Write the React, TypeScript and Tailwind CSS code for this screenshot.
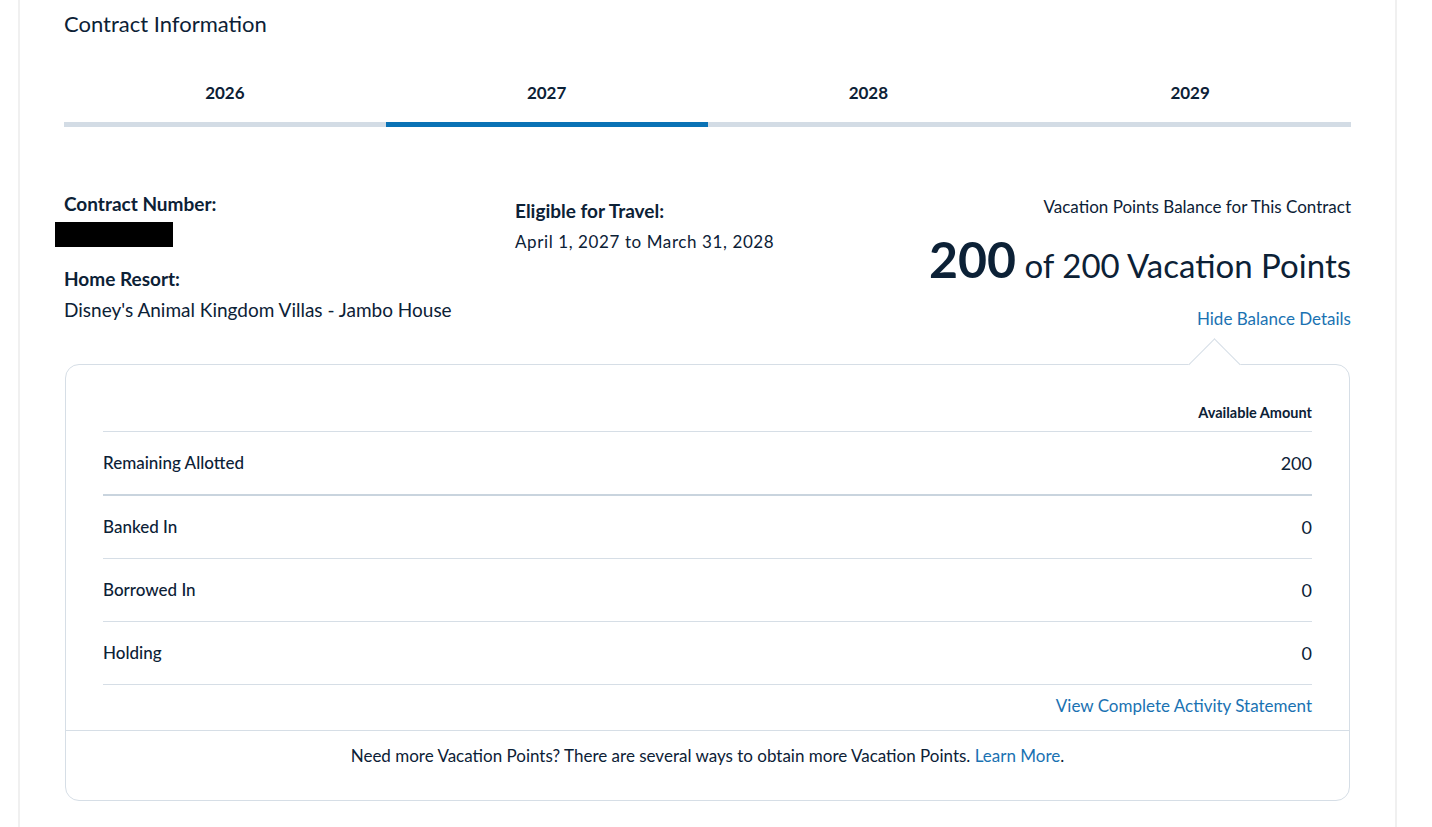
import React from "react";

const rows = [
  { label: "Remaining Allotted", value: "200", strong: true },
  { label: "Banked In", value: "0" },
  { label: "Borrowed In", value: "0" },
  { label: "Holding", value: "0" },
];

export default function App() {
  return (
    <div className="min-h-[827px] bg-white font-['Lato',sans-serif] text-[#0c2136] overflow-hidden">
      <div className="ml-[18px] w-[1379px] min-h-[827px] border-x-2 border-[#f0f0f0] bg-white px-[44px] pt-[11px]">
        <h2 className="text-[22px] leading-[26px] font-normal">Contract Information</h2>

        <div className="mt-[44px] flex">
          {["2026", "2027", "2028", "2029"].map((y) => (
            <div
              key={y}
              className={`flex-1 text-center text-[17px] leading-[24px] font-bold pb-[17px] border-b-[5px] ${
                y === "2027" ? "border-[#0a72b5]" : "border-[#d3dce5]"
              }`}
            >
              {y}
            </div>
          ))}
        </div>

        <div className="mt-[65px] flex">
          <div className="w-[451px]">
            <div className="text-[19px] leading-[24px] font-bold">Contract Number:</div>
            <div className="mt-[6px] -ml-[9px] h-[25px] w-[118px] bg-black" />
            <div className="mt-[20px] text-[19px] leading-[24px] font-bold">Home Resort:</div>
            <div className="mt-[7px] text-[19px] leading-[24px]">Disney's Animal Kingdom Villas - Jambo House</div>
          </div>
          <div className="flex-1 pt-[7px]">
            <div className="text-[19px] leading-[24px] font-bold">Eligible for Travel:</div>
            <div className="mt-[8px] text-[17px] leading-[22px] tracking-[0.6px]">April 1, 2027 to March 31, 2028</div>
          </div>
          <div className="text-right pt-[4px]">
            <div className="text-[17px] leading-[22px]">Vacation Points Balance for This Contract</div>
            <div className="mt-[13px] leading-[56px] whitespace-nowrap">
              <span className="text-[50px] font-bold">200</span>
              <span className="text-[33px]"> of 200 Vacation Points</span>
            </div>
            <a className="mt-[8px] block text-[17px] leading-[22px] text-[#1a72b2]">Hide Balance Details</a>
          </div>
        </div>

        <div className="relative mt-[34px] mx-[1px] rounded-[14px] border border-[#d6dee6] bg-white">
          <div className="absolute right-[116px] top-[-19px] h-[37px] w-[37px] rotate-45 border-l border-t border-[#d6dee6] bg-white" />
          <div className="relative px-[37px]">
            <div className="pt-[38px] pb-[8px] text-right text-[14.5px] leading-[20px] font-bold border-b border-[#d6dee6]">
              Available Amount
            </div>
            {rows.map((r) => (
              <div
                key={r.label}
                className={`flex items-center justify-between text-[17px] ${
                  r.strong ? "h-[64px] border-b-2 border-[#c9d4de]" : "h-[63px] border-b border-[#d6dee6]"
                }`}
              >
                <span className="font-medium">{r.label}</span>
                <span className="text-[18px]">{r.value}</span>
              </div>
            ))}
            <div className="pt-[9px] pb-[12px] text-right">
              <a className="text-[17px] leading-[22px] text-[#1a72b2]">View Complete Activity Statement</a>
            </div>
          </div>
          <div className="border-t border-[#d6dee6] pt-[14px] pb-[33px] text-center text-[17px] leading-[22px]">
            Need more Vacation Points? There are several ways to obtain more Vacation Points.{" "}
            <a className="text-[#1a72b2]">Learn More</a>.
          </div>
        </div>
      </div>
    </div>
  );
}
